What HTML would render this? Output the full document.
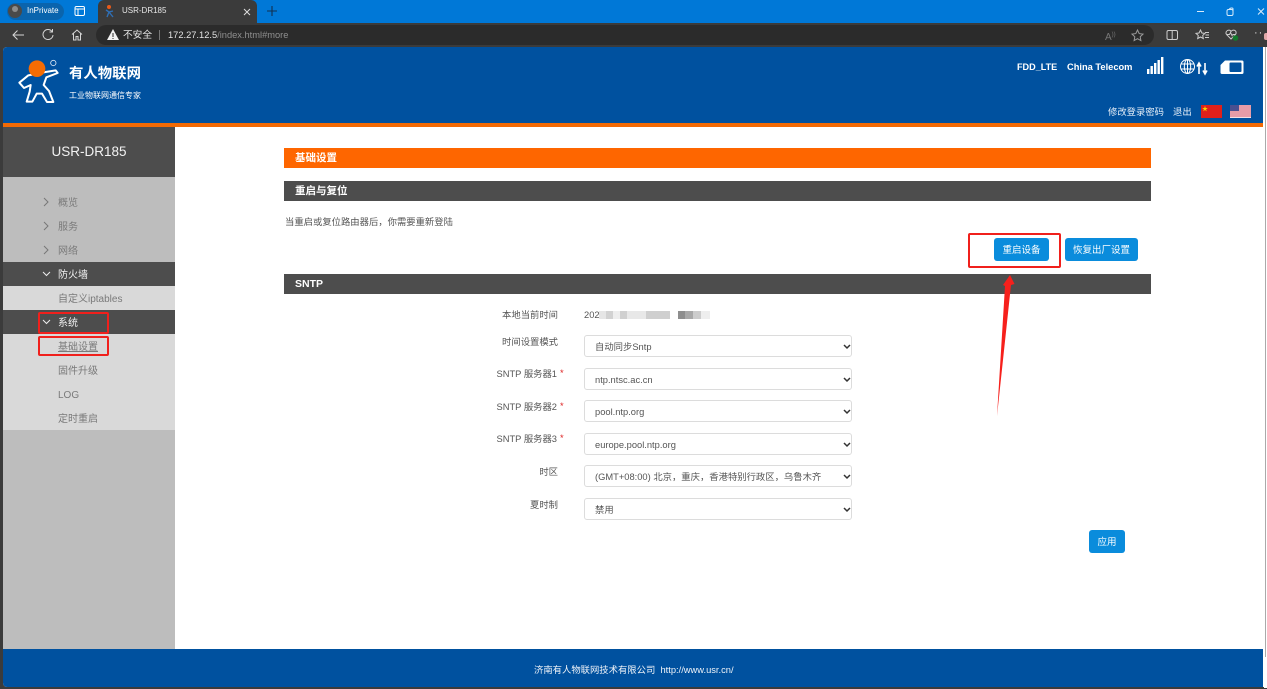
<!DOCTYPE html>
<html lang="zh-CN"><head><meta charset="utf-8"><title>USR-DR185</title>
<style>
html,body{margin:0;padding:0;width:1267px;height:689px;overflow:hidden;background:#fff}
body{position:relative;font-family:"Liberation Sans","Noto Sans CJK SC",sans-serif;font-size:9.33px;color:#555}
.b{position:absolute}
.t{position:absolute;white-space:nowrap;line-height:14px;height:14px}
svg{position:absolute;overflow:visible}
.sel{position:absolute;left:584px;width:268px;height:22px;box-sizing:border-box;border:1px solid #dcdcdc;border-radius:3px;background:#fff;color:#555;line-height:22px;padding-left:10px;font-size:9.33px;white-space:nowrap}
.sel svg{left:258px;top:8px}
.btn{position:absolute;background:#0a8cdc;border-radius:3px;color:#fff;text-align:center;font-size:9.5px;height:23px;line-height:25px}
.lab{position:absolute;right:709px;white-space:nowrap;line-height:14px;font-size:9.33px;color:#555}
.lab i{color:#d22;font-style:normal;position:absolute;left:100%;margin-left:3px;top:-1px}
.h{position:absolute;left:284px;width:867px;height:20px;line-height:21px;color:#fff;font-weight:bold;font-size:10.5px;box-sizing:border-box;padding-left:11px}
.side{left:58px;color:#7a7a7a;font-size:10px}
</style></head><body>
<div class="b" style="left:0;top:0;width:1267px;height:23px;background:#0078d7"></div>
<div class="b" style="left:7px;top:3px;width:57px;height:17px;border-radius:9px;background:#0a64ad"></div>
<div class="b" style="left:8px;top:4px;width:14px;height:14px;border-radius:50%;background:#4a4a4a"></div>
<div class="b" style="left:12px;top:6px;width:6px;height:6px;border-radius:50%;background:#8d8d8d"></div>
<div class="t" style="left:27px;top:4px;color:#fff;font-size:8px">InPrivate</div>
<svg style="left:74px;top:5px" width="12" height="12" fill="none" stroke="#fff" stroke-width="1"><rect x="1" y="1.5" width="9.5" height="9" rx="1.5"/><path d="M1 4h9.5M4 4v6.5"/></svg>
<div class="b" style="left:98px;top:0;width:159px;height:23px;background:#3b3b3b;border-radius:6px 6px 0 0"></div>
<svg style="left:105px;top:4px" width="12" height="14"><circle cx="4" cy="3" r="2" fill="#e85a1a"/><path d="M1 6l3 2 4-1M4 8l-2 5M4 8l4 5" stroke="#2f6fb5" stroke-width="1.4" fill="none"/></svg>
<div class="t" style="left:122px;top:4px;color:#e6e6e6;font-size:8px">USR-DR185</div>
<svg style="left:243px;top:8px" width="8" height="8" stroke="#ddd" stroke-width="1"><path d="M1 1l6 6M7 1l-6 6"/></svg>
<svg style="left:266px;top:5px" width="12" height="12" stroke="#12304f" stroke-width="1.1"><path d="M6 1v10M1 6h10"/></svg>
<svg style="left:1197px;top:8px" width="70" height="10" fill="none" stroke="#d8ebfa" stroke-width="1"><path d="M0 3.5h7"/><rect x="30" y="1.5" width="6" height="6" rx="1.5"/><path d="M32 1.5q1-1.500 2.500-1.500H35q1 0 1 1v3"/><path d="M61 .5l6 6M67 .5l-6 6"/></svg>

<div class="b" style="left:0;top:23px;width:1267px;height:666px;background:#3b3b3b"></div>
<svg style="left:12px;top:29px" width="14" height="12" fill="none" stroke="#d6d6d6" stroke-width="1"><path d="M1 6h11M5.5 1.5L1 6l4.500 4.500"/></svg>
<svg style="left:42px;top:29px" width="12" height="12" fill="none" stroke="#d6d6d6" stroke-width="1"><path d="M10 2.5A5 5 0 1 0 11 6"/><path d="M10.5 0v3h-3"/></svg>
<svg style="left:71px;top:29px" width="12" height="12" fill="none" stroke="#d6d6d6" stroke-width="1"><path d="M1 5.5L6 1l5 4.500M2.500 4.500V11H5V7.500h2V11h2.500V4.500"/></svg>
<div class="b" style="left:96px;top:25px;width:1058px;height:20px;background:#2b2b2b;border-radius:10px"></div>
<svg style="left:107px;top:29px" width="12" height="11"><path d="M6 0l6 11H0z" fill="#f2f2f2"/><path d="M6 4v4M6 9v1" stroke="#2b2b2b"/></svg>
<div class="t" style="left:123px;top:29px;color:#e4e4e4;font-size:9.7px">不安全</div>
<div class="b" style="left:159px;top:30px;width:1px;height:10px;background:#777"></div>
<div class="t" style="left:168px;top:28px;color:#e4e4e4;font-size:9.3px">172.27.12.5<span style="color:#8f8f8f">/index.html#more</span></div>
<div class="t" style="left:1105px;top:28px;color:#777;font-size:10px">A<span style="font-size:6px;vertical-align:4px">))</span></div>
<svg style="left:1131px;top:29px" width="13" height="12" fill="none" stroke="#9a9a9a"><path d="M6.5 1l1.700 3.600 3.800.5-2.800 2.700.7 3.800-3.400-1.900-3.400 1.900.7-3.800L1 5.100l3.800-.5z"/></svg>
<svg style="left:1166px;top:29px" width="13" height="12" fill="none" stroke="#ccc"><rect x="1" y="1.5" width="10.5" height="9" rx="1.5"/><path d="M6.2 1.5v9"/></svg>
<svg style="left:1195px;top:29px" width="15" height="12" fill="none" stroke="#ccc"><path d="M5.5 1l1.400 3 3 .4-2.200 2.100.6 3-2.800-1.500-2.800 1.500.6-3L1 4.400l3-.4zM10 3.500h4M10.500 6h3.500M10 8.500h4"/></svg>
<svg style="left:1225px;top:29px" width="15" height="13" fill="none" stroke="#ccc"><path d="M6 10L1.500 5.500Q0 3 2.500 1.500 5 .5 6 2.500 7.500.5 10 1.500 12 3 10.500 5.500z"/><path d="M2 5.500h2.500l1-2 1.500 3 1-1h2"/><circle cx="10.5" cy="9" r="2.8" fill="#137a2c" stroke="none"/></svg>
<div class="t" style="left:1254px;top:26px;color:#ddd;font-size:11px;letter-spacing:1px">··</div>
<div class="b" style="left:1264px;top:33px;width:3px;height:7px;background:#e2a9a9;border-radius:2px 0 0 2px"></div>

<!-- page -->
<div class="b" style="left:3px;top:47px;width:1261px;height:640px;background:#fff;border-radius:4px 0 0 4px;overflow:hidden"></div>
<div class="b" style="left:1264px;top:47px;width:3px;height:641px;background:#fff"></div>
<div class="b" style="left:1265px;top:47px;width:1px;height:610px;background:#aaa"></div>
<div class="b" style="left:3px;top:47px;width:1260px;height:76px;background:#00519f;border-radius:4px 0 0 0"></div>
<div class="b" style="left:3px;top:123px;width:1260px;height:4px;background:#f26a05"></div>

<svg style="left:10px;top:52px" width="60" height="60" viewBox="0 0 180 180"><path d="M55 70L28 92l14 16 20-9-3 20-9 30h17l13-24h16l15 25h19l-13-33-16-18 8-23 34-13-6-8-37 6z" fill="#00519f" stroke="#fff" stroke-width="6" stroke-linejoin="round"/><circle cx="81" cy="50" r="25" fill="#f56c04"/><circle cx="130" cy="33" r="8" fill="none" stroke="#dfe9f5" stroke-width="2.5"/></svg>
<div class="t" style="left:69px;top:66px;color:#fff;font-size:14.4px;font-weight:bold;line-height:16px;height:16px">有人物联网</div>
<div class="t" style="left:69px;top:89px;color:#fff;font-size:8px">工业物联网通信专家</div>

<div class="t" style="left:1017px;top:60px;color:#fff;font-size:9.1px;font-weight:bold">FDD_LTE</div>
<div class="t" style="left:1067px;top:60px;color:#fff;font-size:9.3px;font-weight:bold">China Telecom</div>
<svg style="left:1147px;top:57px" width="17" height="17" fill="#fff"><rect x="0" y="12" width="2.4" height="5"/><rect x="3.5" y="9" width="2.4" height="8"/><rect x="7" y="6" width="2.4" height="11"/><rect x="10.5" y="3" width="2.4" height="14"/><rect x="14" y="0" width="2.4" height="17"/></svg>
<svg style="left:1180px;top:59px" width="28" height="16" fill="none" stroke="#fff" stroke-width="1"><circle cx="7.5" cy="7.5" r="7"/><ellipse cx="7.5" cy="7.5" rx="3.2" ry="7"/><path d="M7.5.5v14M1 5h13M1 10h13"/><path d="M19 15V5M17 7.500L19 4l2 3.500M25 4v10M23 11.500L25 15l2-3.500" stroke-width="1.6"/></svg>
<svg style="left:1220px;top:60px" width="24" height="15"><path d="M5 .5H22q1.500 0 1.500 1.500V12.500q0 1.500-1.500 1.500H2Q.5 14 .5 12.500V5z" fill="#fff"/><rect x="9.5" y="2.5" width="12" height="9.500" rx="1" fill="#00519f"/></svg>

<div class="t" style="left:1108px;top:105px;color:#e8f0f8;font-size:9.33px">修改登录密码</div>
<div class="t" style="left:1173px;top:105px;color:#e8f0f8;font-size:9.33px">退出</div>
<div class="b" style="left:1201px;top:105px;width:21px;height:13px;background:#e0201a"></div>
<div class="t" style="left:1202px;top:103px;color:#f6d400;font-size:6px">★</div>
<svg style="left:1230px;top:105px" width="21" height="13"><rect width="21" height="13" fill="#f4dfe4"/><path d="M0 1h21M0 3h21M0 5h21M0 7h21M0 9h21M0 11h21" stroke="#d8596c"/><rect width="9" height="6" fill="#4a4f90"/></svg>

<!-- sidebar -->
<div class="b" style="left:3px;top:127px;width:172px;height:522px;background:#bdbdbd"></div>
<div class="b" style="left:3px;top:127px;width:172px;height:50px;background:#4d4d4d"></div>
<div class="t" style="left:3px;width:172px;text-align:center;top:144px;color:#f2f2f2;font-size:13.5px;line-height:16px;height:16px">USR-DR185</div>
<div class="b" style="left:3px;top:262px;width:172px;height:24px;background:#4d4d4d"></div>
<div class="b" style="left:3px;top:286px;width:172px;height:24px;background:#d9d9d9"></div>
<div class="b" style="left:3px;top:310px;width:172px;height:24px;background:#4d4d4d"></div>
<div class="b" style="left:3px;top:334px;width:172px;height:96px;background:#d9d9d9"></div>

<svg style="left:43px;top:197px" width="6" height="60" fill="none" stroke="#777" stroke-width="1"><path d="M1 1l4 4-4 4M1 25l4 4-4 4M1 49l4 4-4 4"/></svg>
<svg style="left:42px;top:271px" width="9" height="60" fill="none" stroke="#eee" stroke-width="1"><path d="M1 1l3.500 3.500L8 1M1 49l3.500 3.500L8 49"/></svg>
<div class="t side" style="top:197px">概览</div>
<div class="t side" style="top:221px">服务</div>
<div class="t side" style="top:245px">网络</div>
<div class="t" style="left:58px;top:269px;color:#f2f2f2;font-size:10px">防火墙</div>
<div class="t side" style="top:293px">自定义iptables</div>
<div class="t" style="left:58px;top:317px;color:#f2f2f2;font-size:10px">系统</div>
<div class="t side" style="top:341px;text-decoration:underline">基础设置</div>
<div class="t side" style="top:365px">固件升级</div>
<div class="t side" style="top:389px">LOG</div>
<div class="t side" style="top:413px">定时重启</div>

<div class="b" style="left:38px;top:312px;width:71px;height:22px;box-sizing:border-box;border:2px solid #f0201c;border-radius:2px"></div>
<div class="b" style="left:38px;top:336px;width:71px;height:20px;box-sizing:border-box;border:2px solid #f0201c;border-radius:2px"></div>

<!-- content -->
<div class="h" style="top:148px;background:#fe6600">基础设置</div>
<div class="h" style="top:181px;background:#4d4d4d">重启与复位</div>
<div class="t" style="left:285px;top:215px">当重启或复位路由器后，你需要重新登陆</div>
<div class="btn" style="left:994px;top:238px;width:55px">重启设备</div>
<div class="btn" style="left:1065px;top:238px;width:73px">恢复出厂设置</div>
<div class="h" style="top:274px;background:#4d4d4d">SNTP</div>
<div class="b" style="left:968px;top:233px;width:93px;height:35px;box-sizing:border-box;border:2px solid #f0201c;border-radius:2px"></div>
<svg style="left:990px;top:270px" width="30" height="150"><path d="M7 146L15 16l-2-1 7-10 4.500 9-3.500 1z" fill="#f6201c"/></svg>

<div class="lab" style="top:308px">本地当前时间</div>
<div class="t" style="left:584px;top:308px">202</div>
<div class="b" style="left:599px;top:311px;width:111px;height:8px;background:linear-gradient(90deg,#e6e6e6 0 7px,#d2d2d2 7px 14px,#eee 14px 21px,#d0d0d0 21px 28px,#e8e8e8 28px 47px,#cfcfcf 47px 71px,#fff 71px 79px,#8e8e8e 79px 86px,#a8a8a8 86px 94px,#ccc 94px 102px,#eee 102px 111px)"></div>

<div class="lab" style="top:335px">时间设置模式</div>
<div class="lab" style="top:367px;right:710px">SNTP 服务器1<i>*</i></div>
<div class="lab" style="top:400px;right:710px">SNTP 服务器2<i>*</i></div>
<div class="lab" style="top:432px;right:710px">SNTP 服务器3<i>*</i></div>
<div class="lab" style="top:465px">时区</div>
<div class="lab" style="top:498px">夏时制</div>

<div class="sel" style="top:335px">自动同步Sntp<svg width="8" height="6" fill="none" stroke="#333" stroke-width="1.5"><path d="M1 1l3 3 3-3"/></svg></div>
<div class="sel" style="top:368px">ntp.ntsc.ac.cn<svg width="8" height="6" fill="none" stroke="#333" stroke-width="1.5"><path d="M1 1l3 3 3-3"/></svg></div>
<div class="sel" style="top:400px">pool.ntp.org<svg width="8" height="6" fill="none" stroke="#333" stroke-width="1.5"><path d="M1 1l3 3 3-3"/></svg></div>
<div class="sel" style="top:433px">europe.pool.ntp.org<svg width="8" height="6" fill="none" stroke="#333" stroke-width="1.5"><path d="M1 1l3 3 3-3"/></svg></div>
<div class="sel" style="top:465px">(GMT+08:00) 北京，重庆，香港特别行政区，乌鲁木齐<svg width="8" height="6" fill="none" stroke="#333" stroke-width="1.5"><path d="M1 1l3 3 3-3"/></svg></div>
<div class="sel" style="top:498px">禁用<svg width="8" height="6" fill="none" stroke="#333" stroke-width="1.5"><path d="M1 1l3 3 3-3"/></svg></div>

<div class="btn" style="left:1089px;top:530px;width:36px">应用</div>

<!-- footer -->
<div class="b" style="left:3px;top:649px;width:1260px;height:38px;background:#00519f;border-radius:0 0 0 4px"></div>
<div class="t" style="left:534px;top:663px;color:#f0f4f9;font-size:9.33px">济南有人物联网技术有限公司&nbsp; http://www.usr.cn/</div>
</body></html>
